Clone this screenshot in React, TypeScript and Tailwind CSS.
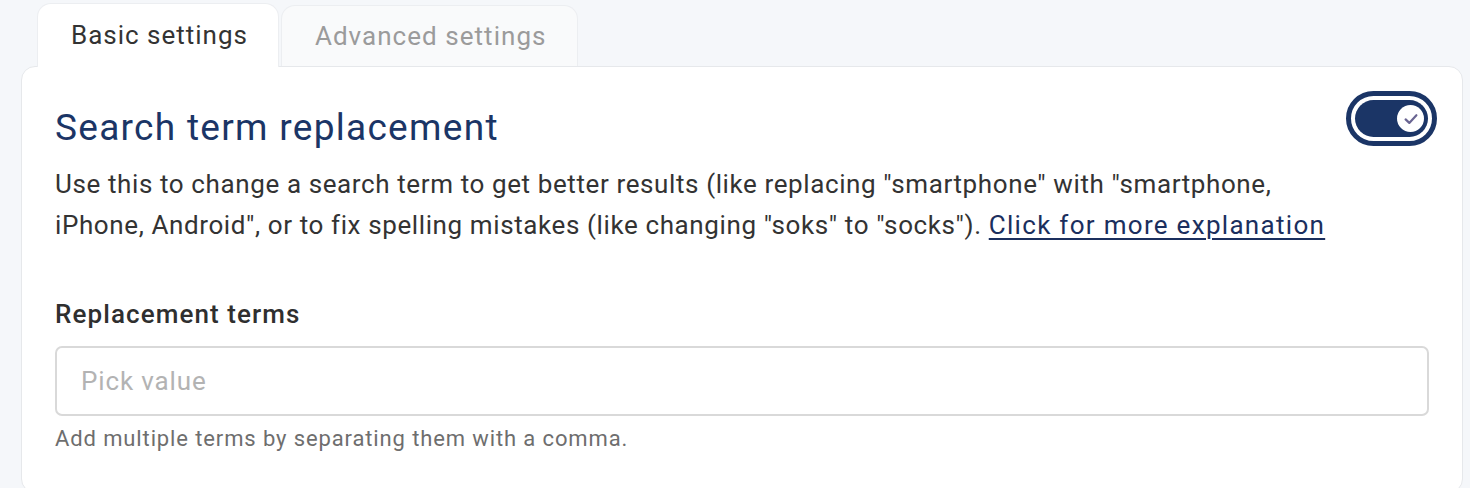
import React from 'react';

function Toggle() {
  return (
    <div className="w-[91px] h-[55px] rounded-full border-[5px] border-[#1b3566] p-[4px] bg-white shrink-0">
      <div className="h-full w-full rounded-full bg-[#1b3566] flex items-center justify-end pr-[4px]">
        <div className="w-[27px] h-[27px] rounded-full bg-white flex items-center justify-center">
          <svg width="18" height="18" viewBox="0 0 18 18" fill="none">
            <path d="M3.6 9.4 L7.3 12.9 L14.4 5.2" stroke="#6a6592" strokeWidth="2.2" strokeLinecap="round" strokeLinejoin="round" />
          </svg>
        </div>
      </div>
    </div>
  );
}

export default function App() {
  return (
    <div className="min-h-screen bg-[#f5f7fa] pl-[21px] pr-[7px] pt-[3px] font-['Roboto',sans-serif] tracking-[0.038em]">
      {/* Tabs */}
      <div className="flex items-start pl-[16px] gap-[2px]">
        <div className="relative z-10 -mb-px h-[64px] pl-[33px] pr-[30px] bg-white rounded-t-[14px] border border-b-0 border-[#eceef1] flex items-center text-[26px] tracking-[0.038em] text-[#333333]">
          Basic settings
        </div>
        <div className="mt-[2px] h-[61px] pl-[33px] pr-[30px] bg-[#f9fafb] rounded-t-[14px] border border-b-0 border-[#eceef1] flex items-center text-[26px] tracking-[0.04em] text-[#9b9b9b]">
          Advanced settings
        </div>
      </div>

      {/* Card */}
      <div className="bg-white border border-[#e6e8eb] rounded-[14px] pl-[33px] pr-[25px] pt-[24px] pb-[40px]">
        <div className="flex items-start justify-between">
          <h1 className="mt-[15px] text-[37px] leading-[44px] tracking-[0.035em] text-[#1b3566]">Search term replacement</h1>
          <Toggle />
        </div>

        <p className="mt-[14px] max-w-[1300px] text-[26px] leading-[41px] text-[#333333]">
          Use this to change a search term to get better results (like replacing "smartphone" with "smartphone,
          iPhone, Android", or to fix spelling mistakes (like changing "soks" to "socks").{' '}
          <a href="#" className="text-[#1b2f5e] underline underline-offset-[4px] decoration-[2px] tracking-[0.05em]">Click for more explanation</a>
        </p>

        <div className="pr-[8px]">
          <label className="block mt-[53px] text-[26px] leading-[30px] font-medium tracking-[0.042em] text-[#2f2f2f]">Replacement terms</label>
          <input
            type="text"
            placeholder="Pick value"
            className="mt-[17px] block w-full h-[70px] rounded-[7px] border-2 border-[#d9d9d9] bg-white px-[24px] text-[26px] tracking-[0.033em] text-[#333333] placeholder:text-[#b3b3b3] outline-none"
          />
          <div className="mt-[10px] text-[22px] leading-[26px] tracking-[0.04em] text-[#6e6e6e]">
            Add multiple terms by separating them with a comma.
          </div>
        </div>
      </div>
    </div>
  );
}
